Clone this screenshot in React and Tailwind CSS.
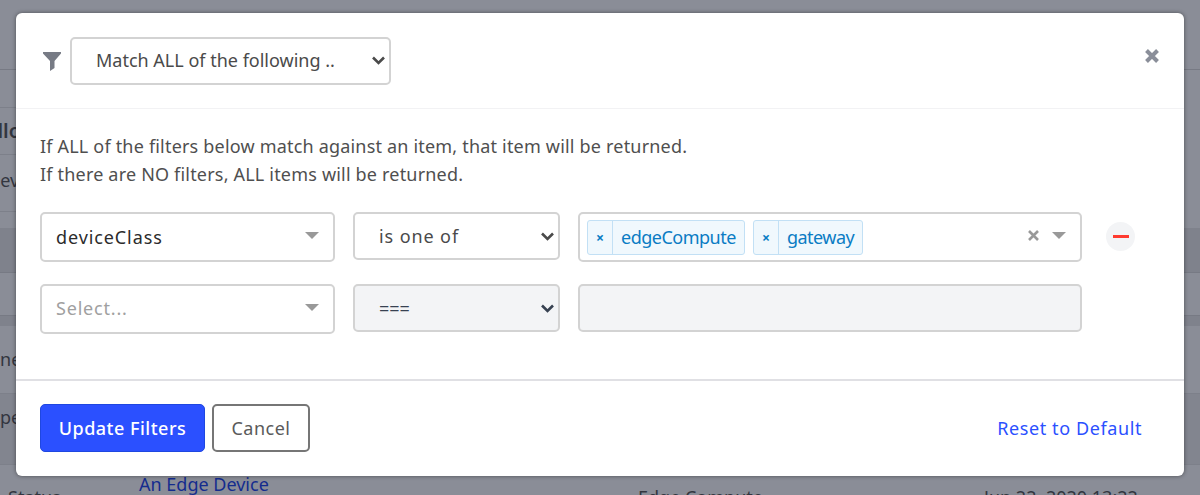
const FONT = "font-['Noto_Sans',sans-serif]";

function Caret() {
  return <span className="mb-[3px] h-0 w-0 border-x-[7px] border-t-[7px] border-x-transparent border-t-[#999]" />;
}

function Chevron({ color = '#4a4a4a' }) {
  return (
    <svg width="13" height="9" viewBox="0 0 13 9" fill="none" stroke={color} strokeWidth="2.6">
      <path d="M1 1.5 L6.5 7 L12 1.5" />
    </svg>
  );
}

function NativeSelect({ label, disabled, className }) {
  return (
    <div
      className={`flex h-[48px] items-center justify-between rounded-[5px] border-2 border-[#d3d3d3] pl-[24px] pr-[4px] text-[18px] ${
        disabled ? 'bg-[#f3f4f6] text-[#374151]' : 'bg-white text-[#4a4a4a]'
      } ${className}`}
    >
      <span>{label}</span>
      <Chevron color={disabled ? '#374151' : '#4a4a4a'} />
    </div>
  );
}

function FakeSelect({ children }) {
  return (
    <div className="flex h-[50px] w-[295px] items-center justify-between rounded-[5px] border-2 border-[#d3d3d3] bg-white px-[14px] text-[18px]">
      {children}
      <Caret />
    </div>
  );
}

function Tag({ label }) {
  return (
    <div className="mt-[1px] flex h-[35px] items-center rounded-[3px] border border-[#c2e0f5] bg-[#f0f8fd] text-[#0a7cc4]">
      <span className="flex h-full w-[25px] items-center justify-center border-r border-[#c2e0f5] text-[14px] font-bold">×</span>
      <span className="px-[8px] text-[18px] tracking-[-0.5px]">{label}</span>
    </div>
  );
}

function Backdrop() {
  return (
    <div className="absolute inset-0 bg-[#8a8d97] text-[18px] text-[#33363f]">
      <div className="h-[70px] border-b border-[#777a84]" />
      <div className="h-[38px] w-[16px] border-b border-[#7d808a]" />
      <div className="h-[47px] w-[16px] overflow-hidden whitespace-nowrap border-b border-[#7d808a] pt-[8px]">
        <span className="-ml-[16px] text-[20px] font-semibold">Allow</span>
      </div>
      <div className="h-[57px] w-[16px] overflow-hidden whitespace-nowrap border-b border-[#7d808a] pt-[12px]">
        <span className="-ml-[13px]">Device</span>
      </div>
      <div className="h-[16px]" />
      <div className="h-[45px] border-b border-[#777a84] bg-[#7f828c]" />
      <div className="h-[43px] border-b border-[#777a84]" />
      <div className="h-[10px] bg-[#7f828c]" />
      <div className="h-[68px] border-b border-[#7d808a] bg-[#8a8d97]">
        <div className="w-[16px] overflow-hidden whitespace-nowrap pt-[20px]">
          <span className="-ml-[14px]">One</span>
        </div>
      </div>
      <div className="h-[70px] bg-[#82858f]">
        <div className="w-[16px] overflow-hidden whitespace-nowrap pt-[10px]">
          <span className="-ml-[10px]">Spec</span>
        </div>
      </div>
      <div className="flex h-[32px] items-start overflow-hidden whitespace-nowrap border-t border-[#7d808a] pl-[8px]">
        <span className="mt-[19px] w-[131px]">Status</span>
        <span className="mt-[6px] w-[499px] text-[#142c8e]">An Edge Device</span>
        <span className="mt-[19px] w-[346px]">Edge Compute</span>
        <span className="mt-[19px]">Jun 22, 2020 13:22</span>
      </div>
    </div>
  );
}

export default function App() {
  return (
    <div className={`relative h-[495px] w-[1200px] overflow-hidden ${FONT}`}>
      <Backdrop />

      <div className="absolute left-[16px] top-[13px] flex h-[463px] w-[1168px] flex-col rounded-[6px] bg-white shadow-[0_0_4px_rgba(0,0,0,0.45)]">
        <div className="flex h-[96px] items-center border-b border-[#f2f2f4] pl-[27px] pr-[25px]">
          <svg width="18" height="19" viewBox="0 0 18 19" className="mr-[9px] mt-[2px]" fill="#777b85">
            <path d="M0 0 H18 V1.5 L11.5 9 V16 L7 19 V9 L0 1.5 Z" />
          </svg>
          <NativeSelect label="Match ALL of the following .." className="w-[321px]" />
          <svg width="14" height="14" viewBox="0 0 14 14" className="mb-[10px] ml-auto" stroke="#8a8e99" strokeWidth="4">
            <path d="M1.5 1.5 L12.5 12.5 M12.5 1.5 L1.5 12.5" />
          </svg>
        </div>

        <div className="flex-1 border-b-2 border-[#e0e0e4] pl-[24px] pt-[23px]">
          <p className="text-[18px] leading-[28px] tracking-[0.19px] text-[#4f4f4f]">
            If ALL of the filters below match against an item, that item will be returned.
            <br />
            If there are NO filters, ALL items will be returned.
          </p>
          <div className="mt-[24px] flex items-start gap-[18px]">
            <FakeSelect>
              <span className="tracking-[0.9px] text-[#2b2b2b]">deviceClass</span>
            </FakeSelect>
            <NativeSelect label="is one of" className="w-[207px] tracking-[0.9px]" />
            <div className="flex h-[50px] w-[504px] items-center rounded-[5px] border-2 border-[#d3d3d3] bg-white pl-[7px] pr-[14px]">
              <div className="flex gap-[8px]">
                <Tag label="edgeCompute" />
                <Tag label="gateway" />
              </div>
              <svg width="11" height="11" viewBox="0 0 11 11" className="mb-[3px] ml-auto mr-[13px]" stroke="#999" strokeWidth="2.6">
                <path d="M1 1 L10 10 M10 1 L1 10" />
              </svg>
              <Caret />
            </div>
            <div className="ml-[6px] mt-[10px] flex h-[29px] w-[29px] items-center justify-center rounded-full bg-[#f3f4f6]">
              <span className="h-[3px] w-[16px] bg-[#ff3b30]" />
            </div>
          </div>
          <div className="mt-[22px] flex items-start gap-[18px]">
            <FakeSelect>
              <span className="mb-[2px] tracking-[0.8px] text-[#a0a0a0]">Select...</span>
            </FakeSelect>
            <NativeSelect label="===" disabled className="w-[207px]" />
            <div className="h-[48px] w-[504px] rounded-[5px] border-2 border-[#d3d3d3] bg-[#f3f4f6]" />
          </div>
        </div>

        <div className="flex h-[95px] items-center pb-[2px] pl-[24px] pr-[42px]">
          <button className="h-[48px] w-[165px] rounded-[5px] border border-[#1f47e0] bg-[#2b50ff] pt-[2px] text-[18px] font-medium tracking-[0.5px] text-white">
            Update Filters
          </button>
          <button className="ml-[7px] h-[48px] w-[98px] rounded-[5px] border-2 border-[#767676] bg-white pt-[2px] text-[18px] tracking-[0.5px] text-[#5a5a5a]">
            Cancel
          </button>
          <span className="ml-auto mt-[2px] text-[18px] tracking-[0.6px] text-[#2b50ff]">Reset to Default</span>
        </div>
      </div>
    </div>
  );
}
